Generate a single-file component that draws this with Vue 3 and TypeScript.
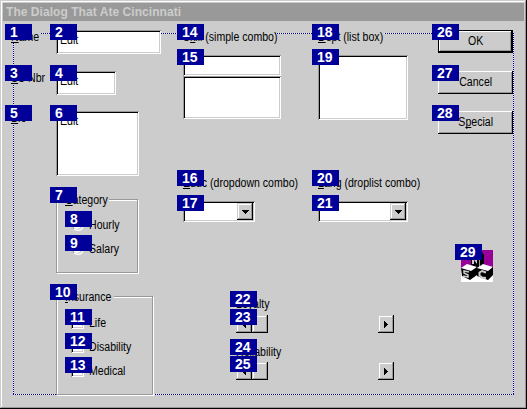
<script setup lang="ts">
interface Choice {
  order: number
  text: string
}

const periods: Choice[] = [
  { order: 8, text: 'Hourly' },
  { order: 9, text: 'Salary' },
]

const policies: Choice[] = [
  { order: 11, text: 'Life' },
  { order: 12, text: 'Disability' },
  { order: 13, text: 'Medical' },
]
</script>

<template>
  <div class="dialog">
    <div class="guide"></div>
    <header class="title"><span>The Dialog That Ate Cincinnati</span></header>
    <main class="body">
      <section class="left">
        <div class="fields">
          <label class="label w-name"><span class="t"><u>N</u>ame</span><b class="badge">1</b></label>
          <div class="edit name"><span class="t">Edit</span><b class="badge">2</b></div>
          <label class="label w-nbr"><span class="t"><u>S</u>S Nbr</span><b class="badge">3</b></label>
          <div class="edit nbr"><span class="t">Edit</span><b class="badge">4</b></div>
          <label class="label w-bio"><span class="t"><u>B</u>io</span><b class="badge">5</b></label>
          <div class="edit bio"><span class="t">Edit</span><b class="badge">6</b></div>
        </div>
        <div class="group category">
          <div class="frame"></div>
          <div class="legend"><span class="t"><u>C</u>ategory</span></div>
          <b class="badge">7</b>
          <div v-for="p in periods" :key="p.order" class="choice">
            <i class="radio"></i><span class="t">{{ p.text }}</span><b class="badge">{{ p.order }}</b>
          </div>
        </div>
        <div class="group insurance">
          <div class="frame"></div>
          <div class="legend"><span class="t"><u>I</u>nsurance</span></div>
          <b class="badge">10</b>
          <div v-for="p in policies" :key="p.order" class="choice">
            <i class="check"></i><span class="t">{{ p.text }}</span><b class="badge">{{ p.order }}</b>
          </div>
        </div>
      </section>

      <section class="middle">
        <div class="lists">
          <div class="cell">
            <label class="label w-skill"><span class="t">S<u>k</u>ill (simple combo)</span><b class="badge">14</b></label>
            <div class="edit simple"><b class="badge">15</b></div>
            <div class="edit simple-list"></div>
          </div>
          <div class="cell">
            <label class="label w-dept"><span class="t"><u>D</u>ept (list box)</span><b class="badge">18</b></label>
            <div class="edit list"><b class="badge">19</b></div>
          </div>
          <div class="cell">
            <label class="label w-wide"><span class="t"><u>E</u>duc (dropdown combo)</span><b class="badge">16</b></label>
            <div class="edit drop educ">
              <i class="btn arrow"><svg width="7" height="4" viewBox="0 0 7 4" shape-rendering="crispEdges"><path d="M0 0h7v1H6v1H5v1H4v1H3V3H2V2H1V1H0z" /></svg></i>
              <b class="badge">17</b>
            </div>
          </div>
          <div class="cell">
            <label class="label w-wide"><span class="t"><u>L</u>ang (droplist combo)</span><b class="badge">20</b></label>
            <div class="edit drop lang">
              <i class="btn arrow"><svg width="7" height="4" viewBox="0 0 7 4" shape-rendering="crispEdges"><path d="M0 0h7v1H6v1H5v1H4v1H3V3H2V2H1V1H0z" /></svg></i>
              <b class="badge">21</b>
            </div>
          </div>
        </div>
        <div class="sliders">
          <label class="label"><span class="t"><u>L</u>oyalty</span><b class="badge">22</b></label>
          <div class="scroll first">
            <i class="btn"><svg width="4" height="7" viewBox="0 0 4 7" shape-rendering="crispEdges"><path d="M4 0v7H3V6H2V5H1V4H0V3h1V2h1V1h1V0z" /></svg></i>
            <i class="btn"></i>
            <i class="btn end"><svg width="4" height="7" viewBox="0 0 4 7" shape-rendering="crispEdges"><path d="M0 0v7h1V6h1V5h1V4h1V3H3V2H2V1H1V0z" /></svg></i>
            <b class="badge">23</b>
          </div>
          <label class="label"><span class="t"><u>R</u>eliability</span><b class="badge">24</b></label>
          <div class="scroll second">
            <i class="btn"><svg width="4" height="7" viewBox="0 0 4 7" shape-rendering="crispEdges"><path d="M4 0v7H3V6H2V5H1V4H0V3h1V2h1V1h1V0z" /></svg></i>
            <i class="btn"></i>
            <i class="btn end"><svg width="4" height="7" viewBox="0 0 4 7" shape-rendering="crispEdges"><path d="M0 0v7h1V6h1V5h1V4h1V3H3V2H2V1H1V0z" /></svg></i>
            <b class="badge">25</b>
          </div>
        </div>
      </section>

      <section class="right">
        <div class="push default"><span class="t">OK</span><b class="badge">26</b></div>
        <div class="push"><span class="t">Cancel</span><b class="badge">27</b></div>
        <div class="push"><span class="t">S<u>p</u>ecial</span><b class="badge">28</b></div>
        <div class="logo">
          <svg width="32" height="32" viewBox="0 0 32 32">
            <path fill="#990099" d="M0 0h32v18H0z" />
            <path fill="#fff" d="M0 18h32v14H0z" />
            <path fill="#000" d="M10 4l3-2h8l2 3v11l-6 2-7-3z" />
            <path stroke="#ccc" stroke-width="2" fill="none" d="M12 14V7l3 4V7" />
            <path stroke="#999" stroke-width="1" fill="none" d="M18.500 6v11" />
            <path fill="#fff" d="M0 18l6-4 10 3-5 4z" />
            <path fill="#000" d="M0 18l10 3 6-4v8l-7 5-8-4z" />
            <path stroke="#ccc" stroke-width="1.500" fill="none" d="M8 22l-5-1v2l4 2v2l-5-1" />
            <path fill="#fff" d="M16 18l6-4 10 3-5 4z" />
            <path fill="#000" d="M16 18l11 3 5-4v8l-5 5-11-4z" />
            <path stroke="#ccc" stroke-width="2" fill="none" d="M25 22.500l-4-1.500-2.500 1.500v3l2.500 2 4 .5" />
          </svg>
          <b class="badge">29</b>
        </div>
      </section>
    </main>
  </div>
</template>

<style>
body {
  margin: 0;
  overflow: hidden;
}
</style>

<style scoped>
.dialog {
  position: relative;
  box-sizing: border-box;
  width: 527px;
  height: 409px;
  padding: 3px;
  background: #ccc;
  box-shadow: inset -1px -1px #000, inset 1px 1px #ccc, inset -2px -2px #999, inset 2px 2px #fff;
  font: 12px/13px 'Liberation Sans', Arial, sans-serif;
  color: #000;
  cursor: default;
}
.guide {
  position: absolute;
  left: 13px;
  top: 33px;
  width: 501px;
  height: 362px;
  background:
    repeating-linear-gradient(90deg, #009 0 1px, #eee 1px 2px) 0 0 / 100% 1px no-repeat,
    repeating-linear-gradient(90deg, #009 0 1px, #eee 1px 2px) 0 100% / 100% 1px no-repeat,
    repeating-linear-gradient(#009 0 1px, #eee 1px 2px) 0 0 / 1px 100% no-repeat,
    repeating-linear-gradient(#009 0 1px, #eee 1px 2px) 100% 0 / 1px 100% no-repeat;
}
.title {
  height: 18px;
  padding-left: 3px;
  background: #999;
  color: #ccc;
  font-weight: bold;
  line-height: 18px;
  white-space: nowrap;
}
.title span {
  letter-spacing: 0.05px;
}
.body {
  display: flex;
  padding: 9px 0 0 8px;
}
.left { width: 172px; }
.middle { width: 255px; }
.right { width: 75px; }
.t {
  display: inline-block;
  transform: translateY(1px) scaleX(0.88);
  transform-origin: 0 0;
  white-space: nowrap;
}
u {
  text-decoration-thickness: 1px;
  text-underline-offset: 1px;
  text-decoration-skip-ink: none;
}
.badge {
  position: absolute;
  z-index: 5;
  left: -6px;
  top: -6px;
  box-sizing: border-box;
  width: 27px;
  height: 16px;
  padding-left: 5px;
  background: #009;
  color: #fff;
  font-size: 14px;
  font-weight: bold;
  line-height: 17px;
}
.label {
  position: relative;
  display: block;
  height: 13px;
  background: #ccc;
}
.w-name { width: 30px; }
.w-nbr { width: 36px; }
.w-bio { width: 18px; }
.w-skill { width: 92px; }
.w-dept { width: 66px; }
.w-wide { width: 112px; }

.fields {
  display: grid;
  grid-template-columns: 45px auto;
  grid-template-rows: 41px 40px 82px;
  align-items: start;
  justify-items: start;
}
.edit {
  position: relative;
  box-sizing: border-box;
  padding: 3px 4px;
  background: #fff;
  box-shadow: inset 1px 1px #999, inset -1px -1px #fff, inset 2px 2px #000, inset -2px -2px #ccc;
}
.edit.name { width: 105px; height: 24px; }
.edit.nbr { width: 60px; height: 24px; }
.edit.bio { width: 83px; height: 65px; }

.group {
  position: relative;
  box-sizing: border-box;
  margin-left: 45px;
  padding: 0 0 0 9px;
}
.category {
  width: 83px;
  height: 81px;
}
.insurance {
  width: 98px;
  height: 106px;
  margin-top: 16px;
}
.frame {
  position: absolute;
  left: 0;
  top: 6px;
  right: 1px;
  bottom: 1px;
  border: 1px solid #999;
  box-sizing: border-box;
  background: #ccc;
  box-shadow: inset 1px 1px #fff, 1px 1px #fff;
}
.legend {
  position: relative;
  height: 13px;
  margin-left: -2px;
  padding-left: 2px;
  margin-bottom: 11px;
  background: #ccc;
}
.insurance .legend {
  width: 49px;
  margin-bottom: 12px;
}
.category .legend { width: 44px; }
.choice {
  position: relative;
  display: flex;
  align-items: flex-start;
  height: 24px;
  margin-left: 6px;
  line-height: 15px;
}
.insurance .choice .t { line-height: 14px; }
.radio,
.check {
  box-sizing: border-box;
  width: 13px;
  height: 13px;
  margin: 1px 5px 0 0;
  background: #fff;
}
.radio {
  width: 12px;
  height: 12px;
  margin: 2px 5px 0 1px;
  border: 1px solid;
  border-color: #999 #fff #fff #999;
  border-radius: 50%;
  box-shadow: inset -1px -1px #ccc;
}
.check {
  box-shadow: inset 1px 1px #999, inset -1px -1px #fff, inset 2px 2px #000, inset -2px -2px #ccc;
}

.lists {
  display: grid;
  grid-template-columns: 135px 120px;
  grid-template-rows: 146px 121px;
}
.cell .label { margin-bottom: 12px; }
.simple { width: 98px; height: 21px; }
.simple-list { width: 98px; height: 43px; }
.list { width: 90px; height: 65px; }
.drop {
  display: flex;
  justify-content: flex-end;
  height: 21px;
  padding: 2px;
}
.educ { width: 72px; }
.lang { width: 90px; }
.btn {
  display: flex;
  flex: none;
  box-sizing: border-box;
  align-items: center;
  justify-content: center;
  width: 16px;
  height: 18px;
  background: #ccc;
  box-shadow: inset -1px -1px #000, inset 1px 1px #ccc, inset -2px -2px #999, inset 2px 2px #fff;
}
.drop .btn { height: 17px; }
.sliders {
  width: 158px;
  margin-left: 53px;
}
.scroll {
  position: relative;
  display: flex;
  height: 18px;
}
.first { margin: 5px 0 12px; }
.second { margin-top: 4px; }
.end { margin-left: auto; }

.push {
  position: relative;
  display: flex;
  box-sizing: border-box;
  align-items: center;
  justify-content: center;
  height: 23px;
  margin-bottom: 17px;
  background: #ccc;
  box-shadow: inset -1px -1px #000, inset 1px 1px #fff, inset -2px -2px #999;
}
.push .t {
  transform: scaleX(0.88);
  transform-origin: 50% 0;
}
.default {
  margin-bottom: 18px;
  box-shadow: inset -2px -2px #000, inset 1px 1px #000, inset 2px 2px #fff, inset -3px -3px #999;
}
.logo {
  position: relative;
  width: 32px;
  height: 32px;
  margin: 116px 0 0 23px;
}
.logo svg { display: block; }
</style>
